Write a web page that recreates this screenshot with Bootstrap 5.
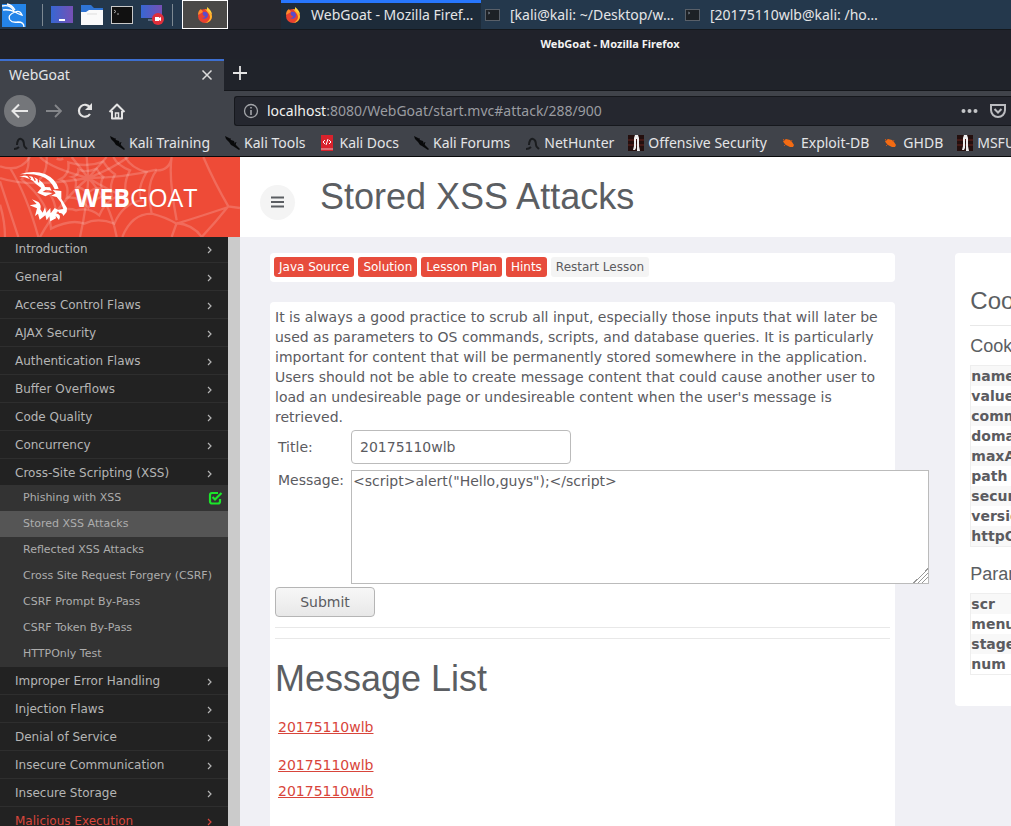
<!DOCTYPE html>
<html lang="en">
<head>
<meta charset="utf-8">
<meta name="viewport" content="width=device-width, initial-scale=1">
<title>WebGoat - Mozilla Firefox</title>
<link href="https://cdn.jsdelivr.net/npm/bootstrap@5.3.0/dist/css/bootstrap.min.css" rel="stylesheet">
<style>
body{font:14px/20px "DejaVu Sans",sans-serif;color:#5b5b5f;background:#f0f0f5;height:100vh;overflow:hidden}
button{border:0;background:none;padding:0;color:inherit}
svg{display:block;flex:none}
a{color:inherit;text-decoration:none}
.chrome{font-family:"Noto Sans",sans-serif;color:#e4e5e7;white-space:nowrap}
.taskbar{height:30px;background:#24384c;border-bottom:1px solid #14181d;font-size:14px}
.launch{padding-left:2px;width:228px;flex:none}
.gapzone{width:53px;flex:none;background:#25262e}
.sep{width:1px;height:22px;background:#7d8992}
.task{width:200px;height:29px;flex:none;gap:10px;padding:0 4px 3px;text-align:left;border-top:3px solid transparent}
.task.on{background:#1d2b39;border-top-color:#2777ff}
.ffbtn{width:46px;height:29px;border:1px solid #fff;background:#4a4947}
.titlebar{height:29px;background:#20222a;font-size:11px;font-weight:700;padding:0 0 2px 209px;color:#f3f3f3}
.tabs{height:32px;background:#20232a;border-bottom:1px solid #15171c}
.tab-on{width:224px;height:32px;background:#40434a;border-top:2px solid #3d6fd0;padding:0 10px 2px 9px;font-size:14px}
.toolbar{height:40px;background:#40434a;padding-left:4px;gap:14px}
.round{width:32px;height:32px;border-radius:50%;background:#74767a;margin-right:-4px}
.url{height:30px;background:#25272f;border:1px solid #16181d;border-right:0;border-radius:3px 0 0 3px;margin-left:94px;padding:0 5px 0 8px;font-size:14px;color:#9a9ca1}
.url b{font-weight:400;color:#f1f1f1}
.marks{height:26px;background:#40434a;border-bottom:1px solid #08090a;font-size:14px;padding:0 0 2px 12px;gap:14px;overflow:hidden}
.marks a{display:flex;align-items:center;gap:4px;flex:none}
.brand{width:240px;height:80px;flex:none;background:#ee4b37;position:relative;color:#fff;font:400 25px "Open Sans",sans-serif;padding-left:75px}
.brand svg{position:absolute;inset:0;width:100%;height:100%}
.brand span{position:relative}
.brand b{font-weight:700}
.tophead{height:80px;background:#fff;padding-left:20px;gap:25px}
.menu-toggle{width:35px;height:35px;border-radius:50%;background:#f4f4f4;margin-top:10px}
h1,h2,h3,h4{font-family:"Liberation Sans",sans-serif;font-weight:400;margin:0;color:#5b5e62}
h1,h2{font-size:36px;line-height:40px}
h2{line-height:44px}
h3{font-size:24px;line-height:28px}
h4{font-size:18px;line-height:20px}
.side{width:240px;flex:none;background:#222;border-right:12px solid #cbcbcb;color:#b5b5b5}
.side .item{display:flex;align-items:center;justify-content:space-between;height:28px;border-bottom:1px solid #2e2e2e;padding:0 14px 0 15px;font-size:12px}
.side .item svg{margin-top:2px}
.side .item:first-child{height:26px;padding-bottom:2px}
.side .open{height:26px;border:0;padding-top:2px}
.side .sub{display:flex;align-items:center;justify-content:space-between;height:26px;background:#333;padding:0 5px 0 23px;font-size:11px;color:#adadad;white-space:nowrap}
.side .sub.on{background:#555}
.side .hot{color:#d9463c}
.content-row{width:133.3333%;margin:0;padding-top:16px}
.content-row>div{padding:0 30px}
.panel{background:#fff;border-radius:4px}
.actions{padding:4px 4px 5px;margin-bottom:20px}
.act{font-size:12px;line-height:20px;height:20px;border-radius:3px;padding:0 5px;background:#e74c3c;color:#fff}
.act.plain{background:#f4f4f4;color:#5b5b5f}
.lesson{padding:5px 5px 60px}
.fgrid{display:grid;grid-template-columns:70px 1fr;column-gap:3px;row-gap:6px;padding:3px 0 3px 3px}
.fgrid .form-control{width:220px;height:34px;font-size:14px;line-height:20px;padding:6px 8px;color:#5b5b5f;border:1px solid #bbb;border-radius:4px}
.fgrid textarea{width:578px;height:114px;padding:0 1px;border:1px solid #bbb;background:#fff;color:#5b5b5f;line-height:20px;resize:both;display:block;overflow:auto}
textarea::-webkit-resizer{background:linear-gradient(135deg,#fff 50%,#999 50% 55%,#fff 55% 64%,#999 64% 69%,#fff 69% 78%,#999 78% 83%,#fff 83%)}
.submit{width:100px;height:30px;border:1px solid #b5b5b5;border-radius:4px;background:linear-gradient(#f7f7f7,#e8e8e8)}
hr{margin:10px 0;border-color:#ccc;opacity:.45}
.links a{display:block;color:#d8453b;text-decoration:underline;padding-left:3px;height:26px}
.info{padding:34px 15px 31px;width:400px}
.info h4{margin:0 0 9px}
.info table+h4{margin-top:17px}
.info table{width:100%;border:1px solid #eee}
.info th{height:20px;padding:0;border:0}
.info tr:nth-child(odd){background:#f8f8f8}
</style>
</head>
<body class="d-flex flex-column">
<svg width="0" height="0" class="position-absolute">
<defs>
<g id="fox"><circle cx="8" cy="9" r="7" fill="#e8412f"/><path d="M8 2c2 0 6 3 7 7 0 4-3 7-7 7 5-2 6-6 4-9z" fill="#ffb52b"/><path d="M1 8c0-3 1-5 3-6l2 3z" fill="#ff8a2b"/><path d="M6 5c2-1 5 0 5 3s-3 5-6 3c2 0 3-1 3-2-2 0-3-2-2-4z" fill="#5b4cc9"/><path d="M10 0c3 2 5 5 5 8-1-2-3-3-5-5z" fill="#ffd33d"/></g>
<g id="term"><rect x=".5" y="1.500" width="14" height="11" fill="#1d2126" stroke="#596069"/><path d="M3 4l2 1-2 1" stroke="#69717a" fill="none"/></g>
<g id="dragon"><path d="M2 14c3 0 4-1 5-2M5 10c0-4 2-7 4-6 3 1 3 4 3 6 0 2 2 3 3 4" fill="none" stroke="#1a1c1f" stroke-width="2"/></g>
<g id="knife"><path d="M1 1l4 2 2 2 3 1 1 3 5 5-1 1-6-4-2-1-2-3-3-3z" fill="#08090a"/><path d="M6 3v3M12 7l-1 3" stroke="#08090a"/></g>
<g id="offsec"><path d="M0 0h16v16H0z" fill="#240f0e"/><path d="M0 5h16M0 10h16" stroke="#66251f"/><path d="M7 0h3l1 3v8l1 5H9V4H8v9l-1 2H5l1-4V3z" fill="#eee"/></g>
<g id="bug"><path d="M2 6l3-2 4 1 2 2 2 3-1 2-3 0-4-2-2-2z" fill="#f36b13"/><path d="M2 4l2 2M11 5l-1 2M3 11l2-2" stroke="#c55418"/></g>
<g id="chev"><path d="M2 1l3 3-3 3" fill="none" stroke="currentColor" stroke-width="1.200"/></g>
</defs>
</svg>

<div class="chrome">
  <div class="taskbar d-flex">
    <div class="launch d-flex align-items-center">
      <button aria-label="Applications"><svg width="24" height="24" viewBox="0 0 24 24"><path d="M0 1h24v23H0z" fill="#2484e8"/><path d="M0 3q8-2 12 5M1 7q6-1 12 2-8 3-5 8 2 3 8 2 6 0 6 5M13 9q5-2 7 3-4-1-7-3M5 1q5 1 8 6" fill="none" stroke="#fff" stroke-width="1.300"/></svg></button>
      <span class="sep ms-3 me-2"></span>
      <button aria-label="Desktop"><svg width="22" height="18"><defs><linearGradient id="pg"><stop stop-color="#3767d2"/><stop offset="1" stop-color="#7650b5"/></linearGradient></defs><rect width="22" height="17" fill="url(#pg)"/><path d="M8 14h6" stroke="#fff" stroke-width="2"/></svg></button>
      <button class="ms-2" aria-label="Files"><svg width="22" height="20"><path d="M0 0h10l3 3h9v4H0z" fill="#2f74d4"/><path d="M0 7h5l3-2h14v15H0z" fill="#fafafa"/><path d="M6 9h10" stroke="#ddd"/></svg></button>
      <button class="ms-2" aria-label="Terminal"><svg width="22" height="18"><rect x=".5" y=".5" width="21" height="17" fill="#111" stroke="#c9c9c9"/><path d="M3 4l2 1.500-2 1.500m3 1h2" stroke="#aaa" fill="none"/></svg></button>
      <button class="ms-2" aria-label="Recorder"><svg width="23" height="20"><rect width="21" height="13" fill="url(#pg)"/><path d="M7 15h6" stroke="#8fa0bb"/><circle cx="17" cy="14" r="6" fill="#df2f3b"/><path d="M14 12h4v1l2-1v4l-2-1v1h-4z" fill="#fff"/></svg></button>
      <span class="sep ms-2"></span>
      <button class="ffbtn d-flex align-items-center justify-content-center ms-auto" aria-label="Firefox"><svg width="16" height="16" viewBox="0 0 16 16"><use href="#fox"/></svg></button>
    </div>
    <div class="gapzone"></div>
    <button class="task on d-flex align-items-center"><svg width="16" height="16" viewBox="0 0 16 16"><use href="#fox"/></svg><span>WebGoat - Mozilla Firef…</span></button>
    <button class="task d-flex align-items-center"><svg width="15" height="14"><use href="#term"/></svg><span>[kali@kali: ~/Desktop/w…</span></button>
    <button class="task d-flex align-items-center"><svg width="15" height="14"><use href="#term"/></svg><span>[20175110wlb@kali: /ho…</span></button>
  </div>
  <div class="titlebar d-flex align-items-center justify-content-center">WebGoat - Mozilla Firefox</div>
  <div class="tabs d-flex align-items-center">
    <div class="tab-on d-flex align-items-center justify-content-between"><span>WebGoat</span><button aria-label="Close tab"><svg width="14" height="14"><path d="M2.500 2.500l9 9M11.500 2.500l-9 9" stroke="#dcdcdc" stroke-width="1.500"/></svg></button></div>
    <button class="ms-2 pb-1" aria-label="New tab"><svg width="16" height="16"><path d="M8 1v14M1 8h14" stroke="#e4e4e4" stroke-width="1.800"/></svg></button>
  </div>
  <div class="toolbar d-flex align-items-center">
    <button class="round d-flex align-items-center justify-content-center" aria-label="Back"><svg width="18" height="16"><path d="M17 8H2M8 1.500L1.500 8 8 14.500" fill="none" stroke="#e8e8e8" stroke-width="2"/></svg></button>
    <button aria-label="Forward"><svg width="16" height="16"><path d="M0 8h15M9 2l6 6-6 6" fill="none" stroke="#84868a" stroke-width="1.800"/></svg></button>
    <button aria-label="Reload"><svg width="18" height="16"><path d="M14 4.500A6 6 0 1 0 14 11" fill="none" stroke="#e4e4e4" stroke-width="2.200"/><path d="M16 0v7H9z" fill="#e4e4e4"/></svg></button>
    <button aria-label="Home"><svg width="18" height="17"><path d="M1.500 9L9 1.500 16.500 9M4 8v7.500h10V8" fill="none" stroke="#e4e4e4" stroke-width="2" stroke-linejoin="round"/><path d="M7.500 15v-5h3v5z" fill="none" stroke="#e4e4e4" stroke-width="1.500"/></svg></button>
    <div class="url d-flex align-items-center flex-grow-1">
      <svg width="16" height="16"><circle cx="8" cy="8" r="6.500" fill="none" stroke="#a4a6aa" stroke-width="1.300"/><path d="M8 7v5M8 4v1.500" stroke="#a4a6aa" stroke-width="1.600"/></svg>
      <div class="ms-2 flex-grow-1" role="textbox" contenteditable="true" aria-label="Address"><b>localhost</b>:8080/WebGoat/start.mvc#attack/288/900</div>
      <svg width="17" height="6"><g fill="#c4c5c8"><circle cx="2.500" cy="3" r="2"/><circle cx="8.500" cy="3" r="2"/><circle cx="14.500" cy="3" r="2"/></g></svg>
      <svg class="ms-2 ps-1" width="20" height="16" viewBox="0 0 16 16"><path d="M1 2h14v5a7 7 0 0 1-14 0z" fill="none" stroke="#bbbcc0" stroke-width="2"/><path d="M4.500 6L8 9.500 11.500 6" fill="none" stroke="#bbbcc0" stroke-width="2"/></svg>
    </div>
  </div>
  <nav class="marks d-flex align-items-center" aria-label="Bookmarks">
    <a href="#"><svg width="16" height="16"><use href="#dragon"/></svg>Kali Linux</a>
    <a href="#"><svg width="16" height="16"><use href="#knife"/></svg>Kali Training</a>
    <a href="#"><svg width="16" height="16"><use href="#knife"/></svg>Kali Tools</a>
    <a href="#"><svg width="16" height="16"><path d="M2 0h12v16H2z" fill="#d8222c"/><path d="M2 14h12" stroke="#e9b7b7"/><path d="M6 5L4 7l2 2m4-4l2 2-2 2M9 4L7 10" stroke="#fff" fill="none"/></svg>Kali Docs</a>
    <a href="#"><svg width="16" height="16"><use href="#knife"/></svg>Kali Forums</a>
    <a href="#"><svg width="16" height="16"><use href="#dragon"/></svg>NetHunter</a>
    <a href="#"><svg width="16" height="16"><use href="#offsec"/></svg>Offensive Security</a>
    <a href="#"><svg width="16" height="16"><use href="#bug"/></svg>Exploit-DB</a>
    <a href="#"><svg width="16" height="16"><use href="#bug"/></svg>GHDB</a>
    <a href="#"><svg width="16" height="16"><use href="#offsec"/></svg>MSFU</a>
  </nav>
</div>

<header class="d-flex">
  <a href="#" class="brand d-flex align-items-center">
    <svg viewBox="0 87 720 240" aria-hidden="true">
      <g fill="none" stroke="#fff" stroke-opacity=".18" stroke-width="7">
        <path d="M265 150L215 87M265 150L260 87M265 150L320 87M265 150Q340 120 385 87M265 150Q370 150 470 125M265 150Q330 190 385 210M265 150Q330 220 350 327M265 150Q260 240 240 327M265 150Q180 220 120 327M265 150Q90 180 0 150M265 150Q150 120 120 87"/>
        <path d="M235 125q25 10 55-3q7 15 20 25q-10 15-5 35q-25-5-43 15q-15-20-35-20q5-25-10-30q20-5 18-22z"/>
        <path d="M205 103q55 17 105-2q15 25 35 38q-18 30-10 65q-40-7-70 35q-25-35-65-30q10-45-20-55q30-15 25-51z"/>
        <path d="M170 92q10 5 20 0M340 87q12 25 50 40q-20 35-12 75q-55 0-80 60q-30-25-70-15q-25-10-60 5q-5-60-60-90q35-20 32-75"/>
        <path d="M375 87q20 35 65 45q-30 50-17 85q-55 10-80 70q-50-20-90 0q-40-15-100 15q-5-80-88-148q25-30 20-67"/>
        <path d="M515 87q-5 40-45 40q-35 40-15 130q-60 0-88 70M515 87q-10 60 15 190M455 257q40 10 75 30q65-20 155-50M610 87q35 80 75 148l35 5M685 235q-40 50-80 92M530 285l-15 42M530 285q50 5 75 42M0 160q30 90 55 167M30 120q50 80 85 207M0 230q15 50 15 97M0 115q60 20 90-28"/>
      </g>
      <g fill="#fff">
        <path d="M60 139Q100 125 135 138Q168 153 176 182L164 184Q152 154 122 144Q95 135 60 139z"/>
        <path d="M57 145Q90 140 112 153Q132 164 135 177L150 178 155 188 138 185 128 192 158 195 136 205 112 194 124 180 108 168Q95 150 57 145z"/>
        <path d="M158 186L184 189 184 212 201 240 200 252 190 264Q188 254 178 255L172 246 190 243 182 222 170 207 154 203 167 196z"/>
        <path d="M89 232L110 228 96 214 115 222Q125 230 121 244L128 254 135 238 139 254 151 240 152 256 164 240 176 247 168 256Q186 260 177 276L167 264 168 271 151 280 148 265 140 277 136 262 119 275 114 257 105 264 111 241z"/>
      </g>
      <path d="M80 139l12 14M97 141l9 17M114 147l2 16" fill="none" stroke="#ee4b37" stroke-width="4"/>
    </svg>
    <span><b>WEB</b>GOAT</span>
  </a>
  <div class="tophead d-flex align-items-center flex-grow-1">
    <button class="menu-toggle d-flex align-items-center justify-content-center" aria-label="Toggle menu"><svg width="13" height="12"><path d="M0 1.500h13M0 6h13M0 10.500h13" stroke="#5b5e62" stroke-width="2"/></svg></button>
    <h1>Stored XSS Attacks</h1>
  </div>
</header>

<div class="d-flex flex-grow-1 overflow-hidden">
  <nav class="side" aria-label="Lessons">
    <a href="#" class="item">Introduction<svg width="8" height="8"><use href="#chev"/></svg></a>
    <a href="#" class="item">General<svg width="8" height="8"><use href="#chev"/></svg></a>
    <a href="#" class="item">Access Control Flaws<svg width="8" height="8"><use href="#chev"/></svg></a>
    <a href="#" class="item">AJAX Security<svg width="8" height="8"><use href="#chev"/></svg></a>
    <a href="#" class="item">Authentication Flaws<svg width="8" height="8"><use href="#chev"/></svg></a>
    <a href="#" class="item">Buffer Overflows<svg width="8" height="8"><use href="#chev"/></svg></a>
    <a href="#" class="item">Code Quality<svg width="8" height="8"><use href="#chev"/></svg></a>
    <a href="#" class="item">Concurrency<svg width="8" height="8"><use href="#chev"/></svg></a>
    <a href="#" class="item open">Cross-Site Scripting (XSS)<svg width="8" height="8"><use href="#chev"/></svg></a>
    <a href="#" class="sub">Phishing with XSS<svg width="15" height="14"><path d="M12 8v2.500a2 2 0 0 1-2 2H4a2 2 0 0 1-2-2V4a2 2 0 0 1 2-2h6M4.500 6L7 8.500 13.500 2" fill="none" stroke="#1be62a" stroke-width="2.200"/></svg></a>
    <a href="#" class="sub on">Stored XSS Attacks</a>
    <a href="#" class="sub">Reflected XSS Attacks</a>
    <a href="#" class="sub">Cross Site Request Forgery (CSRF)</a>
    <a href="#" class="sub">CSRF Prompt By-Pass</a>
    <a href="#" class="sub">CSRF Token By-Pass</a>
    <a href="#" class="sub">HTTPOnly Test</a>
    <a href="#" class="item">Improper Error Handling<svg width="8" height="8"><use href="#chev"/></svg></a>
    <a href="#" class="item">Injection Flaws<svg width="8" height="8"><use href="#chev"/></svg></a>
    <a href="#" class="item">Denial of Service<svg width="8" height="8"><use href="#chev"/></svg></a>
    <a href="#" class="item">Insecure Communication<svg width="8" height="8"><use href="#chev"/></svg></a>
    <a href="#" class="item">Insecure Storage<svg width="8" height="8"><use href="#chev"/></svg></a>
    <a href="#" class="item hot">Malicious Execution<svg width="8" height="8"><use href="#chev"/></svg></a>
  </nav>
  <main class="flex-grow-1 overflow-hidden">
    <div class="row content-row">
      <div class="col-8">
        <div class="panel actions d-flex gap-1">
          <button class="act">Java Source</button><button class="act">Solution</button><button class="act">Lesson Plan</button><button class="act">Hints</button><button class="act plain">Restart Lesson</button>
        </div>
        <div class="panel lesson">
          <div>It is always a good practice to scrub all input, especially those inputs that will later be used as parameters to OS commands, scripts, and database queries. It is particularly important for content that will be permanently stored somewhere in the application. Users should not be able to create message content that could cause another user to load an undesireable page or undesireable content when the user's message is retrieved.</div>
          <form>
            <div class="fgrid">
              <label for="title" class="align-self-center">Title:</label>
              <input id="title" class="form-control" value="20175110wlb">
              <label for="message">Message:</label>
              <textarea id="message" class="position-relative">&lt;script&gt;alert("Hello,guys");&lt;/script&gt;</textarea>
            </div>
            <button type="button" class="submit">Submit</button>
          </form>
          <hr><hr>
          <h2 class="pt-2 mt-2">Message List</h2>
          <div class="links pt-3"><a href="#" class="mb-2 pb-1">20175110wlb</a><a href="#" class="pt-1 mb-1">20175110wlb</a><a href="#">20175110wlb</a></div>
        </div>
      </div>
      <div class="col-4">
        <div class="panel info">
          <h3>Cookies / Parameters</h3>
          <hr>
          <h4>Cookie/s</h4>
          <table><tbody><tr><th>name</th></tr><tr><th>value</th></tr><tr><th>comment</th></tr><tr><th>domain</th></tr><tr><th>maxAge</th></tr><tr><th>path</th></tr><tr><th>secure</th></tr><tr><th>version</th></tr><tr><th>httpOnly</th></tr></tbody></table>
          <h4>Parameters</h4>
          <table><tbody><tr><th>scr</th></tr><tr><th>menu</th></tr><tr><th>stage</th></tr><tr><th>num</th></tr></tbody></table>
        </div>
      </div>
    </div>
  </main>
</div>
<script src="https://cdn.jsdelivr.net/npm/bootstrap@5.3.0/dist/js/bootstrap.bundle.min.js"></script>
</body>
</html>
